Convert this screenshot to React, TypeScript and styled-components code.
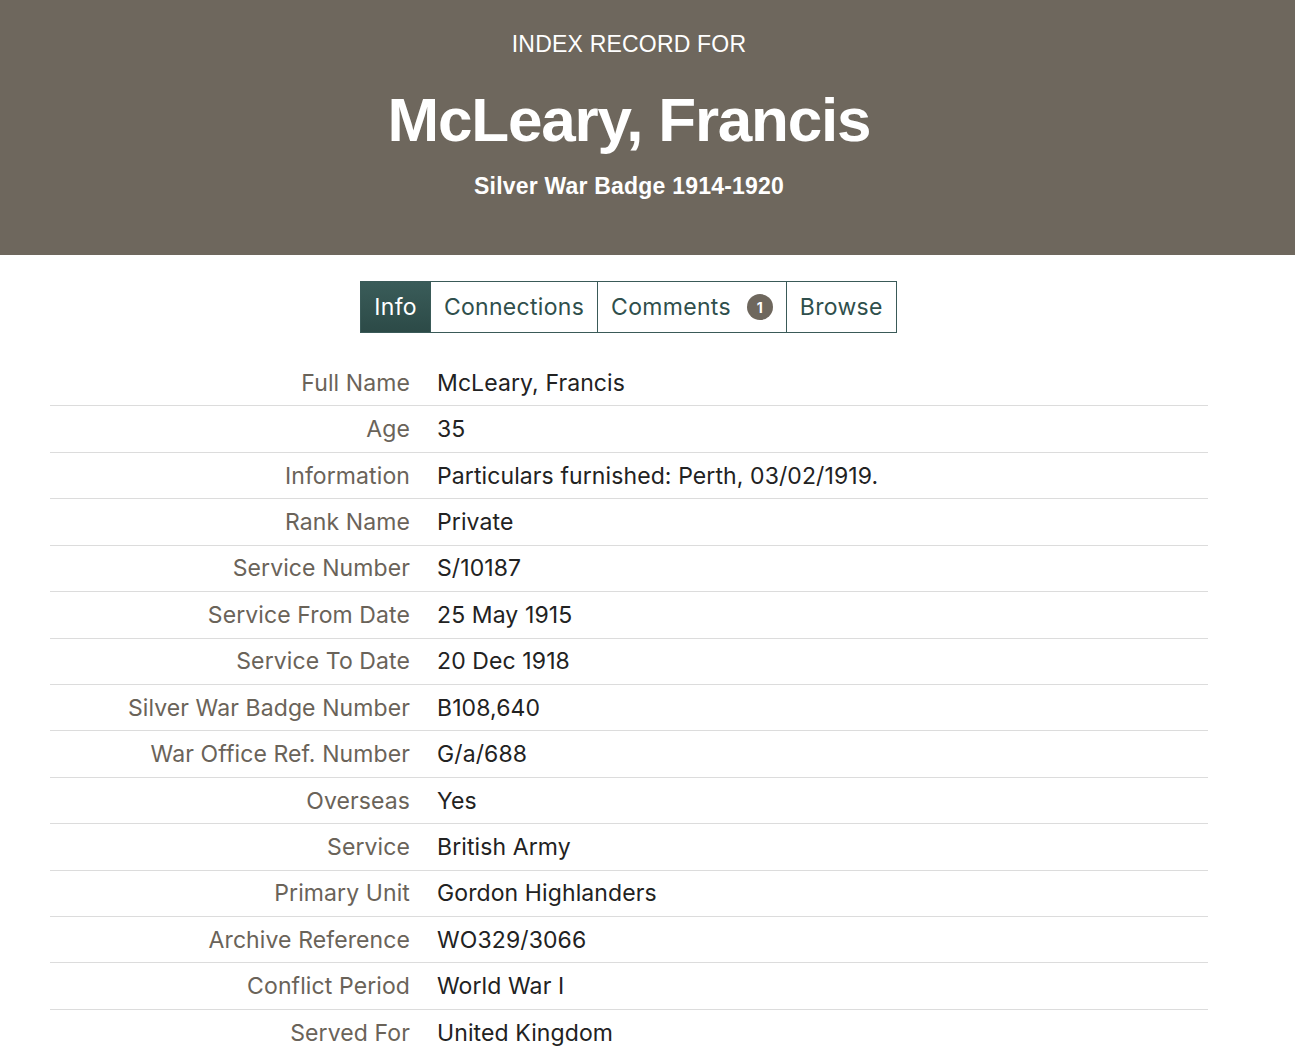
import React from "react";
import styled, { createGlobalStyle } from "styled-components";

const GlobalStyle = createGlobalStyle`
  body {
    margin: 0;
    background: #ffffff;
    font-family: Inter, "Liberation Sans", Arial, sans-serif;
  }
`;

const Header = styled.header`
  background: #6e675d;
  height: 255px;
  color: #ffffff;
`;

const HeaderInner = styled.div`
  width: 1258px;
  text-align: center;
  font-family: "Liberation Sans", Arial, sans-serif;
  padding-top: 28px;
  box-sizing: border-box;
`;

const Kicker = styled.div`
  font-size: 23px;
  letter-spacing: 0.2px;
  line-height: 32px;
`;

const Title = styled.h1`
  margin: 20px 0 0;
  font-size: 62px;
  font-weight: 700;
  letter-spacing: -1.2px;
  line-height: 80px;
`;

const Subtitle = styled.div`
  margin-top: 11px;
  font-size: 23px;
  font-weight: 700;
  letter-spacing: 0.2px;
  line-height: 30px;
`;

const Main = styled.main`
  width: 1258px;
`;

const Tabs = styled.nav`
  display: flex;
  justify-content: center;
  margin-top: 26px;
`;

const Tab = styled.button<{ $active?: boolean }>`
  display: flex;
  align-items: center;
  gap: 16px;
  height: 52px;
  padding: 0 13px;
  margin-left: -1px;
  border: 1px solid #3a5a58;
  background: ${(p) =>
    p.$active ? "linear-gradient(#3a5c59, #2c4a47)" : "#ffffff"};
  color: ${(p) => (p.$active ? "#ffffff" : "#2f4f4c")};
  font-family: Inter, "Liberation Sans", Arial, sans-serif;
  font-size: 23px;
  letter-spacing: 0.3px;
  cursor: pointer;
`;

const Badge = styled.span`
  display: inline-flex;
  align-items: center;
  justify-content: center;
  width: 26px;
  height: 26px;
  border-radius: 50%;
  background: #6e675d;
  color: #ffffff;
  font-size: 14px;
  font-weight: 700;
  letter-spacing: 0;
`;

const Table = styled.dl`
  margin: 27px 50px 0;
  width: 1158px;
`;

const Row = styled.div`
  display: grid;
  grid-template-columns: 360px 1fr;
  column-gap: 27px;
  align-items: center;
  height: 46.43px;
  box-sizing: border-box;
  border-bottom: 1px solid #dcdcdc;
  font-size: 23px;
  letter-spacing: 0.1px;
`;

const Label = styled.dt`
  text-align: right;
  color: #6a6359;
`;

const Value = styled.dd`
  margin: 0;
  color: #222222;
`;

const rows: [string, string][] = [
  ["Full Name", "McLeary, Francis"],
  ["Age", "35"],
  ["Information", "Particulars furnished: Perth, 03/02/1919."],
  ["Rank Name", "Private"],
  ["Service Number", "S/10187"],
  ["Service From Date", "25 May 1915"],
  ["Service To Date", "20 Dec 1918"],
  ["Silver War Badge Number", "B108,640"],
  ["War Office Ref. Number", "G/a/688"],
  ["Overseas", "Yes"],
  ["Service", "British Army"],
  ["Primary Unit", "Gordon Highlanders"],
  ["Archive Reference", "WO329/3066"],
  ["Conflict Period", "World War I"],
  ["Served For", "United Kingdom"],
];

export default function App() {
  return (
    <>
      <GlobalStyle />
      <Header>
        <HeaderInner>
          <Kicker>INDEX RECORD FOR</Kicker>
          <Title>McLeary, Francis</Title>
          <Subtitle>Silver War Badge 1914-1920</Subtitle>
        </HeaderInner>
      </Header>
      <Main>
        <Tabs>
          <Tab $active>Info</Tab>
          <Tab>Connections</Tab>
          <Tab>
            Comments<Badge>1</Badge>
          </Tab>
          <Tab>Browse</Tab>
        </Tabs>
        <Table>
          {rows.map(([label, value]) => (
            <Row key={label}>
              <Label>{label}</Label>
              <Value>{value}</Value>
            </Row>
          ))}
        </Table>
      </Main>
    </>
  );
}
